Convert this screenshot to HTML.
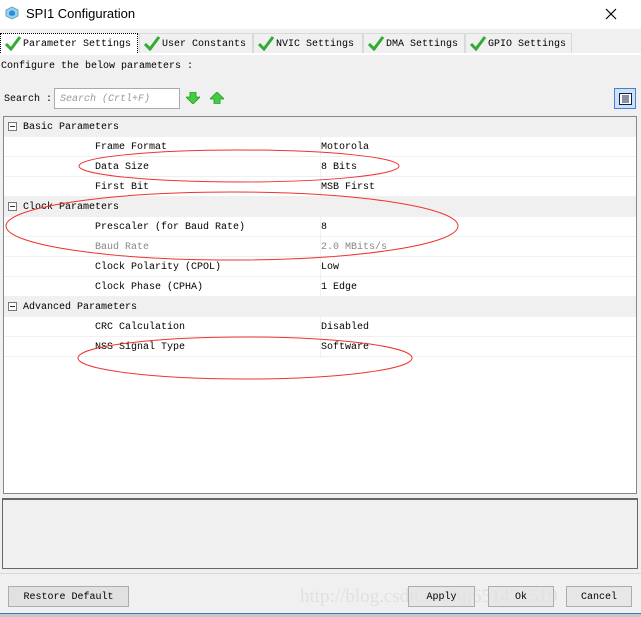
<!DOCTYPE html>
<html><head><style>
*{margin:0;padding:0;box-sizing:border-box}
body{width:641px;height:617px;background:#f0f0f0;position:relative;overflow:hidden;font-family:"Liberation Mono",monospace;font-size:10px;color:#000}
.a{position:absolute}
.title{left:0;top:0;width:641px;height:29px;background:#fff;font-family:"Liberation Sans",sans-serif;font-size:13px}
.tab{top:33px;height:20px;border:1px solid #d9d9d9;border-bottom:none;background:#f0f0f0;line-height:22px;padding-left:22px;white-space:nowrap}
.tab svg{position:absolute;left:3px;top:1px}
.tree{left:3px;top:116px;width:634px;height:378px;background:#fff;border:1px solid #888}
.row{position:absolute;left:0;width:632px;height:20px;line-height:21px;border-bottom:1px solid #f0f0f0}
.g{background:#f0f0f0}
.g .box{position:absolute;left:4px;top:5px;width:9px;height:9px;border:1px solid #777;background:#fff}
.g .box:after{content:"";position:absolute;left:1px;top:3px;width:5px;height:1px;background:#333}
.n{position:absolute;left:91px}.v{position:absolute;left:316px;border-left:1px solid #f0f0f0}
.btn{top:586px;height:21px;border:1px solid #adadad;background:#e1e1e1;text-align:center;line-height:22px}
</style></head><body>
<div class="a title">
<svg class="a" style="left:5px;top:6px" width="14" height="14"><polygon points="7,1 13,4 13,10 7,13 1,10 1,4" fill="#9cd0f0" stroke="#6ab" stroke-width="1"/><polygon points="7,4 10,6 10,9 7,10 4,9 4,6" fill="#2a8fd8"/></svg>
<span class="a" style="left:26px;top:6px">SPI1 Configuration</span>
<svg class="a" style="left:304px;top:8px;left:304px" width="0" height="0"></svg>
<svg class="a" style="left:304px;top:8px" width="0" height="0"></svg>
<svg class="a" style="left:304px" width="0" height="0"></svg>
<svg class="a" style="left:305px;top:9px;left:305px" width="0" height="0"></svg>
<svg class="a" style="left:305px;top:9px" width="0" height="0"></svg>
<svg class="a" style="left:305px" width="0" height="0"></svg>
<svg class="a" style="left:304px;top:8px" width="0" height="0"></svg>
<svg class="a" style="left:305px;top:8px" width="0" height="0"></svg>
<svg class="a" style="left:305px;top:8px" width="0" height="0"></svg>
<svg class="a" style="left:305px;top:8px" width="0" height="0"></svg>
<svg class="a" style="left:305px;top:8px" width="0" height="0"></svg>
<svg class="a" style="left:605px;top:8px" width="12" height="12"><path d="M1 1L11 11M11 1L1 11" stroke="#000" stroke-width="1.2"/></svg>
</div>
<div class="a tab" style="left:0;width:138px;background:#fff;border:1px dotted #000;border-bottom:none">
<svg width="18" height="16"><path d="M2 9 L7 14 L16 2" fill="none" stroke="#3a3" stroke-width="3"/></svg>Parameter Settings</div>
<div class="a tab" style="left:139px;width:114px"><svg width="18" height="16"><path d="M2 9 L7 14 L16 2" fill="none" stroke="#3a3" stroke-width="3"/></svg>User Constants</div>
<div class="a tab" style="left:253px;width:110px"><svg width="18" height="16"><path d="M2 9 L7 14 L16 2" fill="none" stroke="#3a3" stroke-width="3"/></svg>NVIC Settings</div>
<div class="a tab" style="left:363px;width:102px"><svg width="18" height="16"><path d="M2 9 L7 14 L16 2" fill="none" stroke="#3a3" stroke-width="3"/></svg>DMA Settings</div>
<div class="a tab" style="left:465px;width:107px"><svg width="18" height="16"><path d="M2 9 L7 14 L16 2" fill="none" stroke="#3a3" stroke-width="3"/></svg>GPIO Settings</div>
<div class="a" style="left:0;top:53px;width:641px;height:2px;background:#fff"></div>
<div class="a" style="left:1px;top:61px">Configure the below parameters :</div>
<div class="a" style="left:4px;top:94px">Search :</div>
<div class="a" style="left:54px;top:88px;width:126px;height:21px;background:#fff;border:1px solid #aaa;color:#999;font-style:italic;line-height:21px;padding-left:5px">Search (Crtl+F)</div>
<svg class="a" style="left:186px;top:92px" width="14" height="12"><polygon points="4,0 10,0 10,5 14,5 7,12 0,5 4,5" fill="#4c4" stroke="#292" stroke-width=".8"/></svg>
<svg class="a" style="left:210px;top:92px" width="14" height="12"><polygon points="4,12 10,12 10,7 14,7 7,0 0,7 4,7" fill="#4c4" stroke="#292" stroke-width=".8"/></svg>
<div class="a" style="left:614px;top:88px;width:22px;height:21px;border:1px solid #4a7fd0;background:#cde0f7"><svg style="position:absolute;left:4px;top:4px" width="13" height="12"><rect x=".5" y=".5" width="12" height="11" fill="#fff" stroke="#124"/><path d="M3 3h7M3 5h7M3 7h7M3 9h7" stroke="#124"/></svg></div>
<div class="a tree">
<div class="row g" style="top:0"><span class="box"></span><span class="a" style="left:19px">Basic Parameters</span></div>
<div class="row" style="top:20px"><span class="n">Frame Format</span><span class="v">Motorola</span></div>
<div class="row" style="top:40px"><span class="n">Data Size</span><span class="v">8 Bits</span></div>
<div class="row" style="top:60px"><span class="n">First Bit</span><span class="v">MSB First</span></div>
<div class="row g" style="top:80px"><span class="box"></span><span class="a" style="left:19px">Clock Parameters</span></div>
<div class="row" style="top:100px"><span class="n">Prescaler (for Baud Rate)</span><span class="v">8</span></div>
<div class="row" style="top:120px;color:#888"><span class="n">Baud Rate</span><span class="v">2.0 MBits/s</span></div>
<div class="row" style="top:140px"><span class="n">Clock Polarity (CPOL)</span><span class="v">Low</span></div>
<div class="row" style="top:160px"><span class="n">Clock Phase (CPHA)</span><span class="v">1 Edge</span></div>
<div class="row g" style="top:180px"><span class="box"></span><span class="a" style="left:19px">Advanced Parameters</span></div>
<div class="row" style="top:200px"><span class="n">CRC Calculation</span><span class="v">Disabled</span></div>
<div class="row" style="top:220px"><span class="n">NSS Signal Type</span><span class="v">Software</span></div>
</div>
<svg class="a" style="left:0;top:0" width="641" height="617"><g fill="none" stroke="#e33" stroke-width="1"><ellipse cx="239" cy="166" rx="160" ry="16"/><ellipse cx="232" cy="226" rx="226" ry="34"/><ellipse cx="245" cy="358" rx="167" ry="21"/></g></svg>
<div class="a" style="left:2px;top:498px;width:636px;height:71px;border:1px solid #666;border-top:2px solid #666"></div>
<div class="a" style="left:0;top:573px;width:641px;height:1px;background:#d8d8d8"></div>
<div class="a" style="left:300px;top:586px;font-family:'Liberation Serif',serif;font-size:19px;color:#e0e0e0">http://blog.csdn.net/hjj651471519</div>
<div class="a btn" style="left:8px;width:121px">Restore Default</div>
<div class="a btn" style="left:408px;width:67px;background:rgba(225,225,225,.6)">Apply</div>
<div class="a btn" style="left:488px;width:66px;background:rgba(225,225,225,.6)">Ok</div>
<div class="a btn" style="left:566px;width:66px;background:rgba(225,225,225,.6)">Cancel</div>
<div class="a" style="left:0;top:613px;width:641px;height:4px;background:#c8c8c8;border-top:1px solid #3a78c8"></div>
</body></html>
